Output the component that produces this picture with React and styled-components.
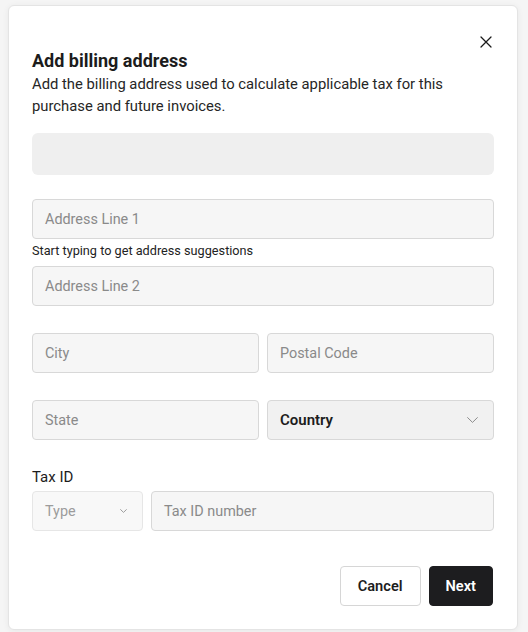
import React from "react";
import styled, { createGlobalStyle } from "styled-components";

const Global = createGlobalStyle`
  html, body { margin: 0; padding: 0; }
  body {
    background: #f4f4f4;
    font-family: "Roboto", "Liberation Sans", sans-serif;
    -webkit-font-smoothing: antialiased;
  }
  * { box-sizing: border-box; }
`;

const Page = styled.div`
  width: 528px;
  height: 632px;
  padding: 5px 10px 2px 8px;
  background: #f5f5f5;
`;

const Modal = styled.div`
  position: relative;
  width: 510px;
  height: 625px;
  background: #ffffff;
  border: 1px solid #e4e4e4;
  border-radius: 6px;
  box-shadow: 0 1px 6px rgba(0, 0, 0, 0.06);
  padding: 41px 23px 0 23px;
  display: flex;
  flex-direction: column;
`;

const Close = styled.button`
  position: absolute;
  top: 24px;
  right: 19px;
  width: 24px;
  height: 24px;
  padding: 0;
  border: 0;
  background: transparent;
  display: flex;
  align-items: center;
  justify-content: center;
`;

const Title = styled.h2`
  margin: 0;
  font-size: 18px;
  line-height: 27px;
  font-weight: 700;
  color: #1c1c1c;
`;

const Desc = styled.p`
  margin: 0;
  font-size: 14.8px;
  line-height: 21.5px;
  color: #262626;
  max-width: 440px;
`;

const Skeleton = styled.div`
  margin-top: 16px;
  height: 42px;
  border-radius: 6px;
  background: #efefef;
`;

const Field = styled.div`
  height: 40px;
  border: 1px solid ${(p) => (p.$muted ? "#e6e6e6" : "#d8d8d8")};
  border-radius: 4px;
  background: ${(p) => (p.$dark ? "#f1f1f1" : p.$muted ? "#f8f8f8" : "#f6f6f6")};
  display: flex;
  align-items: center;
  justify-content: space-between;
  padding: 0 ${(p) => (p.$select ? "15px" : "12px")} 0 12px;
  font-size: ${(p) => (p.$strong ? "15px" : "14.4px")};
  color: ${(p) => (p.$strong ? "#1c1c1c" : p.$muted ? "#9c9c9c" : "#8a8a8a")};
  font-weight: ${(p) => (p.$strong ? 600 : 400)};
  margin-top: ${(p) => p.$mt || "0px"};
`;

const Helper = styled.div`
  margin: 4px 0 7px;
  font-size: 12.7px;
  line-height: 16px;
  color: #222;
`;

const Row = styled.div`
  display: grid;
  grid-template-columns: ${(p) => p.$cols || "1fr 1fr"};
  gap: 8px;
  margin-top: ${(p) => p.$mt || "27px"};
`;

const Label = styled.div`
  margin-top: 27px;
  margin-bottom: 4px;
  font-size: 15px;
  line-height: 20px;
  color: #1c1c1c;
`;

const Footer = styled.div`
  margin-top: 35px;
  display: flex;
  justify-content: flex-end;
  gap: 8px;
  padding-right: 1px;
`;

const Button = styled.button`
  height: 40px;
  padding: 0 ${(p) => (p.$primary ? "16px" : "17px")};
  border-radius: 4px;
  font-family: inherit;
  font-size: 14.6px;
  font-weight: 600;
  border: 1px solid ${(p) => (p.$primary ? "#1d1d1f" : "#d6d6d6")};
  background: ${(p) => (p.$primary ? "#1d1d1f" : "#ffffff")};
  color: ${(p) => (p.$primary ? "#ffffff" : "#1d1d1d")};
`;

const Chevron = ({ w, h, color }) => (
  <svg width={w} height={h} viewBox={`0 0 ${w} ${h}`} fill="none">
    <path
      d={`M0.6 0.6L${w / 2} ${h - 0.6}L${w - 0.6} 0.6`}
      stroke={color}
      strokeWidth="1"
      strokeLinecap="round"
      strokeLinejoin="round"
    />
  </svg>
);

export default function App() {
  return (
    <>
      <Global />
      <Page>
        <Modal>
          <Close aria-label="Close">
            <svg width="12" height="12" viewBox="0 0 12 12">
              <path d="M1 1l10 10M11 1L1 11" stroke="#1a1a1a" strokeWidth="1.25" strokeLinecap="round" />
            </svg>
          </Close>
          <Title>Add billing address</Title>
          <Desc>Add the billing address used to calculate applicable tax for this purchase and future invoices.</Desc>
          <Skeleton />
          <Field $mt="24px">Address Line 1</Field>
          <Helper>Start typing to get address suggestions</Helper>
          <Field>Address Line 2</Field>
          <Row>
            <Field>City</Field>
            <Field>Postal Code</Field>
          </Row>
          <Row>
            <Field>State</Field>
            <Field $dark $strong $select>
              Country
              <Chevron w={11} h={6} color="#8c8c8c" />
            </Field>
          </Row>
          <Label>Tax ID</Label>
          <Row $cols="111px 1fr" $mt="0px">
            <Field $muted $select>
              Type
              <Chevron w={7} h={4} color="#9c9c9c" />
            </Field>
            <Field>Tax ID number</Field>
          </Row>
          <Footer>
            <Button>Cancel</Button>
            <Button $primary>Next</Button>
          </Footer>
        </Modal>
      </Page>
    </>
  );
}
